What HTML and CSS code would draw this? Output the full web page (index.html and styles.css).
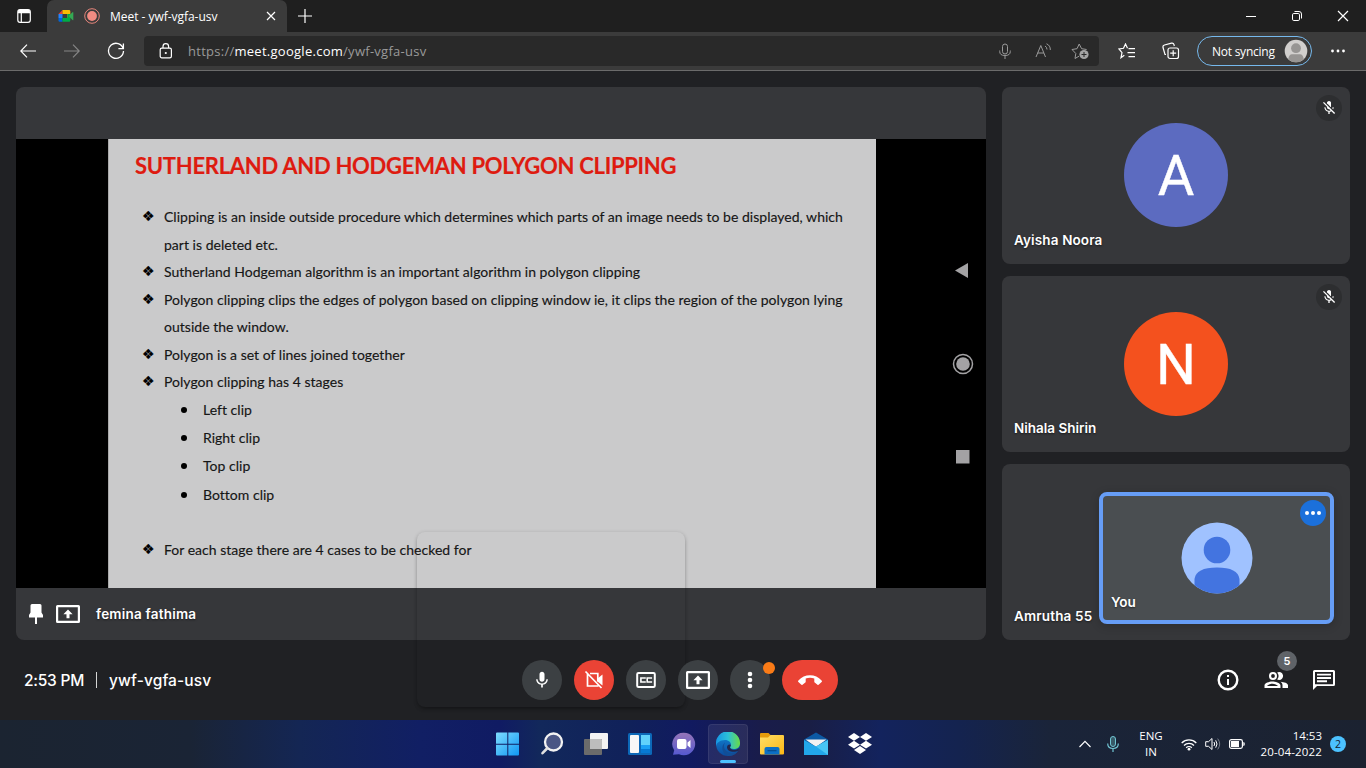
FILE: index.html
```html
<!DOCTYPE html>
<html lang="en">
<head>
<meta charset="utf-8">
<title>Meet - ywf-vgfa-usv</title>
<link rel="stylesheet" href="styles.css">
</head>
<body>
<svg class="defs" width="0" height="0">
  <defs>
    <symbol id="mic-off" viewBox="0 0 24 24"><path d="M10.8 4.9c0-.66.54-1.2 1.2-1.2s1.2.54 1.2 1.2l-.01 3.91L15 10.6V5c0-1.66-1.34-3-3-3-1.54 0-2.79 1.16-2.96 2.65l1.76 1.76V4.9zM19 11h-1.7c0 .58-.1 1.13-.27 1.64l1.27 1.27c.44-.88.7-1.87.7-2.91zM4.41 2.86 3 4.27l6 6V11c0 1.66 1.34 3 3 3 .23 0 .44-.03.65-.08l1.66 1.66c-.71.33-1.5.52-2.31.52-2.76 0-5.3-2.1-5.3-5.1H5c0 3.41 2.72 6.23 6 6.72V21h2v-3.28c.91-.13 1.77-.45 2.55-.9l4.2 4.18 1.41-1.41L4.41 2.86z"/><path d="M9 4.7 15 11V5a3 3 0 0 0-6-.3z"/></symbol>
    <symbol id="present" viewBox="0 0 24 18"><path fill-rule="evenodd" d="M1.5 0h21Q24 0 24 1.5v15q0 1.500-1.500 1.500h-21Q0 18 0 16.500v-15Q0 0 1.500 0zM2.200 2.200v13.600h19.600V2.200zM12 4.600l4.600 4.600h-3.100v4h-3v-4H7.400z"/></symbol>
  </defs>
</svg>

<header class="tabs">
  <svg class="tab-actions" width="14" height="14" viewBox="0 0 14 14"><path fill="none" stroke="#fff" stroke-width="1.200" d="M.8 3v8Q.8 13.300 3 13.300h8q2.300 0 2.300-2.300V3Q13.300.7 11 .7H3Q.8.700.8 3zM4.300 4v9"/><path fill="#fff" d="M1 4.300V2.500Q1 .8 3 .8h8q2 0 2 1.700v1.800z"/></svg>
  <div class="tab">
    <svg width="16" height="16" viewBox="0 0 16 16"><path fill="#ea4335" d="M.5 6 4.500 2v4z"/><path fill="#fbbc04" d="M4.500 2h6.600q1.200 0 1.200 1.200V8L9.400 10V6H4.500z"/><path fill="#2684fc" d="M.5 6h4v4h-4z"/><path fill="#0066da" d="M.5 10h4v3.700H1.700Q.5 13.700.5 12.500z"/><path fill="#00ac47" d="M4.500 10h4.900V6h2.900v6.500q0 1.200-1.200 1.200H4.500z"/><path fill="#34a853" d="m10.500 8 4-3.700q.8-.6.800.400v7q0 .9-.8.300z"/></svg>
    <svg class="rec" width="16" height="16" viewBox="0 0 16 16"><circle cx="8" cy="8" r="7.300" fill="none" stroke="#e8867c"/><circle cx="8" cy="8" r="4.900" fill="#f28b82"/></svg>
    <span class="tab-title">Meet - ywf-vgfa-usv</span>
    <svg class="tab-close" width="10" height="10" viewBox="0 0 10 10"><path stroke="#fff" stroke-width="1.200" d="m1 1 8 8M9 1 1 9"/></svg>
  </div>
  <svg class="newtab" width="16" height="16" viewBox="0 0 16 16"><path stroke="#fff" stroke-width="1.200" d="M8 1v14M1 8h14"/></svg>
  <div class="win">
    <svg width="12" height="12" viewBox="0 0 12 12"><path stroke="#fff" d="M1 6.500h10"/></svg>
    <svg width="12" height="12" viewBox="0 0 12 12"><rect x="1.500" y="3.500" width="7" height="7" rx="1.300" fill="none" stroke="#fff"/><path fill="none" stroke="#fff" d="M3.500 1.500H8Q10.500 1.500 10.500 4v4.500"/></svg>
    <svg width="12" height="12" viewBox="0 0 12 12"><path stroke="#fff" stroke-width="1.200" d="m1 1 10 10M11 1 1 11"/></svg>
  </div>
</header>

<nav class="toolbar">
  <svg class="back" width="16" height="14" viewBox="0 0 16 14"><path fill="none" stroke="#fff" stroke-width="1.200" d="M16 7H1M7 .7.800 7 7 13.300"/></svg>
  <svg class="fwd" width="16" height="14" viewBox="0 0 16 14"><path fill="none" stroke="#858585" stroke-width="1.200" d="M0 7h15M9 .7 15.200 7 9 13.300"/></svg>
  <svg class="reload" width="18" height="18" viewBox="0 0 18 18"><path fill="none" stroke="#fff" stroke-width="1.300" d="M16.200 6.700A7.500 7.500 0 1 0 16.500 9M16.400 1.600v5h-5"/></svg>
  <div class="address">
    <svg class="lock" width="14" height="16" viewBox="0 0 14 16"><rect x="1.200" y="5.200" width="11.200" height="9.600" rx="1.600" fill="none" stroke="#fff" stroke-width="1.200"/><path fill="none" stroke="#fff" stroke-width="1.200" d="M4 5V3.500a2.800 2.800 0 0 1 5.600 0V5"/><circle cx="6.800" cy="10" r="1.100" fill="#fff"/></svg>
    <span class="url">https://<b>meet.google.com</b>/ywf-vgfa-usv</span>
    <svg class="a-mic" width="12" height="16" viewBox="0 0 12 16"><path fill="none" stroke="#9a9a9a" d="M3.500 3.500a2.500 2.500 0 0 1 5 0v5a2.500 2.500 0 0 1-5 0zM.7 7.500v1q0 4 5.300 4t5.300-4v-1M6 12.500V16"/></svg>
    <svg class="a-read" width="17" height="16" viewBox="0 0 17 16"><path fill="none" stroke="#9a9a9a" d="M1 14 5.800 2.500 10.500 14M2.700 10h6.200M10 3q2 1 2 3.500M11.500.800Q15.500 2.500 15.300 7"/></svg>
    <svg class="a-star" width="18" height="18" viewBox="0 0 18 18"><path fill="none" stroke="#9a9a9a" d="M8 14.200 4 16.500l.8-5L1 7.500l5-.8L8.200 2l2.400 4.700 5 .8"/><circle cx="13" cy="12.500" r="4.600" fill="#a5a5a5"/><path stroke="#292929" d="M13 10v5M10.500 12.500h5"/></svg>
  </div>
  <svg class="favs" width="18" height="16" viewBox="0 0 18 16"><path fill="none" stroke="#fff" stroke-width="1.200" d="M6.300 12.300 3 14.700l1-5L1 6l4.500-.7L7.500 1l2 4.300M10.500 5.700H17M9.500 9.700H17M10.500 13.700H17"/></svg>
  <svg class="coll" width="18" height="18" viewBox="0 0 18 18"><rect x="6" y="6" width="10.500" height="10.500" rx="2" fill="none" stroke="#fff" stroke-width="1.200"/><path fill="none" stroke="#fff" stroke-width="1.200" d="M11.200 8.200v6M8.200 11.200h6M4 12.500H3L1 5.500Q.6 3.500 2.500 3L9.500 1.200q2-.4 2.500 1.500l.3 1.300"/></svg>
  <div class="profile"><span>Not syncing</span><svg width="24" height="24" viewBox="0 0 24 24"><circle cx="12" cy="12" r="11.300" fill="#d1cfcd"/><circle cx="12" cy="9.200" r="4.900" fill="#979593"/><path fill="#979593" d="M4.200 20.200Q5 15.300 8 15.300h8q3 0 3.800 4.900a11.300 11.300 0 0 1-15.600 0z"/></svg></div>
  <svg class="dots" width="16" height="4" viewBox="0 0 16 4"><g fill="#fff"><circle cx="2.500" cy="2" r="1.400"/><circle cx="8" cy="2" r="1.400"/><circle cx="13.500" cy="2" r="1.400"/></g></svg>
</nav>

<main class="meet">
  <div class="stage">
    <section class="share">
      <div class="video">
        <article class="slide">
          <h1>SUTHERLAND AND HODGEMAN POLYGON CLIPPING</h1>
          <ul class="points">
            <li>Clipping is an inside outside procedure which determines which parts of an image needs to be displayed, which<br>part is deleted etc.</li>
            <li>Sutherland Hodgeman algorithm is an important algorithm in polygon clipping</li>
            <li>Polygon clipping clips the edges of polygon based on clipping window ie, it clips the region of the polygon lying<br>outside the window.</li>
            <li>Polygon is a set of lines joined together</li>
            <li>Polygon clipping has 4 stages</li>
          </ul>
          <ul class="clips"><li>Left clip</li><li>Right clip</li><li>Top clip</li><li>Bottom clip</li></ul>
          <ul class="points last"><li>For each stage there are 4 cases to be checked for</li></ul>
        </article>
        <div class="phone-nav">
          <svg width="22" height="208" viewBox="0 0 22 208"><path fill="#a3a2a4" d="M3 8.500 16 1v15z"/><circle cx="11" cy="102" r="9.500" fill="none" stroke="#a3a2a4" stroke-width="1.500"/><circle cx="11" cy="102" r="6.800" fill="#a3a2a4"/><path fill="#a3a2a4" d="M4 188h13.500v13.500H4z"/></svg>
        </div>
      </div>
      <footer class="share-bar">
        <svg width="14" height="20" viewBox="0 0 14 20"><path fill="#fff" d="M1.500 1.500Q1.500 0 3 0h8q1.500 0 1.500 1.500v7L14 11v2.500H8V20H6v-6.500H0V11l1.500-2.500z"/></svg>
        <svg class="pres" width="24" height="18" fill="#fff"><use href="#present"/></svg>
        <span>femina fathima</span>
      </footer>
    </section>
    <aside class="people">
      <div class="tile"><i class="mute"><svg width="16" height="16" fill="#fff"><use href="#mic-off"/></svg></i><div class="avatar indigo">A</div><span class="name ayisha">Ayisha Noora</span></div>
      <div class="tile"><i class="mute"><svg width="16" height="16" fill="#fff"><use href="#mic-off"/></svg></i><div class="avatar orange">N</div><span class="name nihala">Nihala Shirin</span></div>
      <div class="tile"><span class="name amrutha">Amrutha 55</span>
        <div class="self">
          <svg class="self-pic" width="72" height="72" viewBox="0 0 72 72"><defs><clipPath id="c"><circle cx="36" cy="36" r="35.500"/></clipPath></defs><g clip-path="url(#c)"><path fill="#a0c2ff" d="M0 0h72v72H0z"/><circle cx="36" cy="28" r="13.300" fill="#4374e0"/><path fill="#4374e0" d="M13.500 72V57Q15 45.500 36 45.500T58.500 57v15z"/></g></svg>
          <svg class="self-more" width="26" height="26" viewBox="0 0 26 26"><circle cx="13" cy="13" r="13" fill="#1b70db"/><g fill="#fff"><circle cx="7" cy="13" r="2"/><circle cx="13" cy="13" r="2"/><circle cx="19" cy="13" r="2"/></g></svg>
          <span class="you">You</span>
        </div>
      </div>
    </aside>
    <div class="ghost"></div>
  </div>
  <div class="controls">
    <div class="when"><span class="clock">2:53 PM</span><i></i><span class="code">ywf-vgfa-usv</span></div>
    <div class="buttons">
      <div class="btn"><svg width="20" height="20" viewBox="0 0 24 24"><path fill="#fff" d="M12 14c1.660 0 3-1.340 3-3V5c0-1.660-1.340-3-3-3S9 3.340 9 5v6c0 1.660 1.340 3 3 3zM17.300 11c0 3-2.540 5.100-5.300 5.100S6.700 14 6.700 11H5c0 3.410 2.720 6.230 6 6.720V21h2v-3.280c3.280-.48 6-3.300 6-6.720z"/></svg></div>
      <div class="btn red"><svg width="20" height="20" viewBox="0 0 20 20"><path fill="none" stroke="#fff" stroke-width="1.700" d="M6 3.500h7.800v8M3.500 4v12h11M1.500 1.500l16 16.500"/><path fill="#fff" d="m13.500 8.500 5-4v11l-5-4z"/></svg></div>
      <div class="btn"><svg width="20" height="16" viewBox="0 0 20 16"><rect x="1.200" y="1" width="17.600" height="14" rx="1.300" fill="none" stroke="#fff" stroke-width="2"/><path fill="none" stroke="#fff" stroke-width="1.600" d="M9 6.800V6H4.900v4H9v-.8M15.300 6.800V6h-4.100v4h4.100v-.8"/></svg></div>
      <div class="btn"><svg width="24" height="18" fill="#fff"><use href="#present"/></svg></div>
      <div class="btn"><svg width="6" height="18" viewBox="0 0 6 18"><g fill="#fff"><circle cx="3" cy="3" r="2.300"/><circle cx="3" cy="9" r="2.300"/><circle cx="3" cy="15" r="2.300"/></g></svg><i class="alert"></i></div>
      <div class="btn red end"><svg width="24" height="24" viewBox="0 0 24 24"><path fill="#fff" d="m23.600 14-2.700 2.600c-.4.400-1 .4-1.400.1l-2.800-2.100c-.3-.2-.4-.5-.4-.8v-3.400a14 14 0 0 0-8.600 0v3.400c0 .3-.1.600-.4.800l-2.800 2.100c-.4.300-1 .3-1.400-.1L.4 14c-.5-.5-.5-1.100 0-1.600C3.500 9.200 7.500 7.300 12 7.300s8.500 1.900 11.600 5.100c.5.500.5 1.100 0 1.600z"/></svg></div>
    </div>
    <div class="tools">
      <svg width="24" height="24" viewBox="0 0 24 24"><path fill="#fff" d="M11 17h2v-6h-2v6zM11 9h2V7h-2z"/><circle cx="12" cy="12" r="9.300" fill="none" stroke="#fff" stroke-width="2.400"/></svg>
      <div class="crowd"><svg width="24" height="24" viewBox="0 0 24 24"><path fill="#fff" d="M8.500 13.500C6.160 13.500.5 14.670.5 17.500V20h16v-2.500c0-2.830-5.660-4-8-4zM3 18c.84-1.200 3.500-2.300 5.500-2.300S13.160 16.800 14 18H3zM9 12a4 4 0 1 0 0-8 4 4 0 0 0 0 8zm0-5.900a1.900 1.900 0 1 1 0 3.800 1.900 1.900 0 0 1 0-3.800zm7.500 7.600c1.300.9 2 2 2 3.550V20H24v-2.750c0-2.020-4-3.280-7.500-3.550zM15 12a4 4 0 1 0-1.860-7.520 5.500 5.500 0 0 1 0 7.040c.54.300 1.180.48 1.860.48z"/></svg><b class="count">5</b></div>
      <svg width="24" height="24" viewBox="0 0 24 24"><path fill="#fff" d="M2.500 2h19Q23 2 23 3.500v13q0 1.500-1.500 1.500H5l-4 4V3.500Q1 2 2.500 2zM3 4v12.300h18V4zm2 1.700h14v1.900H5zm0 3.300h14v1.900H5zm0 3.300h10v1.900H5z" fill-rule="evenodd"/></svg>
    </div>
  </div>
</main>

<footer class="taskbar">
  <div class="apps">
    <div class="app"><svg width="24" height="24" viewBox="0 0 24 24"><defs><linearGradient id="w" x2="1" y2="1" gradientUnits="objectBoundingBox"><stop stop-color="#7fdcff"/><stop offset="1" stop-color="#0f97f2"/></linearGradient></defs><path fill="url(#w)" d="M0 1.500Q0 .5 1 .5h10.300v11.300H0zM12.300.5H22q1 0 1 1v10.300H12.300zM0 12.800h11.300v10.700H1q-1 0-1-1zM12.300 12.800H23v9.700q0 1-1 1h-9.700z"/></svg></div>
    <div class="app"><svg width="24" height="24" viewBox="0 0 24 24"><circle cx="13.500" cy="10" r="8.500" fill="#4a5684" stroke="#f2f2f2" stroke-width="2.300"/><path stroke="#e0e0e0" stroke-width="2.600" stroke-linecap="round" d="m7 16.500-4.500 4.700"/></svg></div>
    <div class="app"><svg width="24" height="24" viewBox="0 0 24 24"><rect x="6" y="1" width="18" height="16" rx="1" fill="#f2f2f2"/><rect y="7" width="18" height="16" rx="1" fill="#6b6b6b"/><path fill="#bdbdbd" d="M6 7h11q1 0 1 1v9H6z"/></svg></div>
    <div class="app"><svg width="24" height="24" viewBox="0 0 24 24"><rect y="1" width="24" height="22" rx="1.500" fill="#0c68b8"/><rect x="2" y="3" width="9" height="18" rx="1" fill="#f7f7f7"/><path fill="#62d2fb" d="M13 3h9v10h-9z"/><path fill="#1ba0f4" d="M13 13h9v4h-9z"/><path fill="#0779d4" d="M13 17h9v4h-9z"/></svg></div>
    <div class="app"><svg width="24" height="24" viewBox="0 0 24 24"><defs><linearGradient id="ch" x2="0" y2="1"><stop stop-color="#9575b8"/><stop offset="1" stop-color="#5559d0"/></linearGradient></defs><path fill="url(#ch)" d="M12 .7a11.300 11.300 0 1 1-5 21.500L1 22.800l1.200-4.500A11.300 11.300 0 0 1 12 .7z"/><rect x="5" y="7" width="9.500" height="10" rx="2" fill="#fff"/><path fill="#fff" d="m15.500 10.500 3-2.500v8l-3-2.500z"/></svg></div>
    <div class="app active"><svg width="24" height="24" viewBox="0 0 24 24"><defs><linearGradient id="e1"><stop stop-color="#1695e5"/><stop offset=".5" stop-color="#2cc0d8"/><stop offset="1" stop-color="#69dc45"/></linearGradient><linearGradient id="e2" x2="0" y2="1"><stop stop-color="#1389d8"/><stop offset="1" stop-color="#0b4b9e"/></linearGradient></defs><circle cx="12" cy="12" r="12" fill="url(#e2)"/><path fill="url(#e1)" d="M0 12A12 12 0 0 1 24 10.500c.3 4-2.500 6.500-6.300 6.500-3 0-4.300-1.300-3.200-2.700C16 12 14 8 9 8c-5 0-8.500 3-9 6z"/><path fill="#124e96" d="M9 10.500c-3 5 1 10.500 7 10.500 3 0 5-1 6.500-2.500A12 12 0 0 1 12 24C6 22 4.500 14 9 10.500z"/><path fill="#21264c" d="M14.500 14.300c-1.500 2 1 3.700 4 3.700 2 0 3.800-.9 5-2.500L22.500 18.500c-3 2-11 2-11.500-3 0-2 1-3 3-3 .9.400.9 1.200.5 1.800z"/></svg></div>
    <div class="app"><svg width="24" height="24" viewBox="0 0 24 24"><defs><linearGradient id="f" x2="1" y2="1"><stop stop-color="#ffdf68"/><stop offset="1" stop-color="#fdb714"/></linearGradient></defs><path fill="#e59b0b" d="M0 2q0-1 1-1h7.500L11 3.500V7H0z"/><path fill="url(#f)" d="M0 5.500h8L10.500 3H23q1 0 1 1v17.500q0 1-1 1H1q-1 0-1-1z"/><path fill="#0c70c5" d="M4.500 22.500V17q0-2 2-2h11q2 0 2 2v5.500z"/><path fill="#064f91" d="M7.500 18h9v1.300h-9z"/></svg></div>
    <div class="app"><svg width="24" height="24" viewBox="0 0 24 24"><path fill="#0c59a4" d="M0 7.500 12 .5l12 7v4H0z"/><path fill="#f2f2f2" d="M1.500 7.500h21L12 15z"/><path fill="#22a7ea" d="M0 8l12 6.500L24 8v15H0z"/><path fill="#48c5f5" d="m12 14.500 12-6.500v15z"/></svg></div>
    <div class="app"><svg width="24" height="22" viewBox="0 0 24 22"><path fill="#fff" d="M6 0l6 3.900-6 3.900-6-3.900zM18 0l6 3.900-6 3.900-6-3.900zM6 7.800l6 3.900-6 3.900-6-3.900zM18 7.800l6 3.900-6 3.900-6-3.900zM6 17l6-3.900 6 3.900-6 3.900z"/></svg></div>
  </div>
  <div class="tray">
    <svg class="chev" width="12" height="8" viewBox="0 0 12 8"><path fill="none" stroke="#fff" stroke-width="1.200" d="M.5 7 6 1.300 11.500 7"/></svg>
    <svg class="tmic" width="12" height="16" viewBox="0 0 12 16"><path fill="#375a68" stroke="#71c5d4" d="M3.500 3a2.500 2.500 0 0 1 5 0v5a2.500 2.500 0 0 1-5 0z"/><path fill="none" stroke="#71c5d4" stroke-width="1.200" d="M.7 7.500q0 5 5.300 5t5.300-5M6 12.500V16"/></svg>
    <div class="lang"><span>ENG</span><span>IN</span></div>
    <svg class="wifi" width="16" height="13" viewBox="0 0 16 13"><path fill="none" stroke="#fff" stroke-width="1.300" d="M.7 5a10.300 10.300 0 0 1 14.600 0M3 7.500a7 7 0 0 1 10 0M5.200 9.800a4 4 0 0 1 5.600 0"/><circle cx="8" cy="11.200" r="1.400" fill="#fff"/></svg>
    <svg class="vol" width="16" height="14" viewBox="0 0 16 14"><path fill="none" stroke="#fff" d="M.7 4.700h2.800L7 1.500v11L3.500 9.300H.7zM9 5q1.300 2 0 4M10.700 3.300q2.600 3.700 0 7.400"/><path fill="none" stroke="#777d89" d="M12.700 1.600q4 5.400 0 10.800"/></svg>
    <svg class="bat" width="16" height="10" viewBox="0 0 16 10"><rect x=".6" y=".6" width="12.800" height="8.800" rx="1.800" fill="none" stroke="#fff" stroke-width="1.200"/><rect x="2" y="2" width="8" height="6" fill="#fff"/><path fill="#fff" d="M14.300 3q1.500 0 1.500 2t-1.500 2z"/></svg>
    <div class="date"><span>14:53</span><span class="day">20-04-2022</span></div>
    <b class="notif">2</b>
  </div>
</footer>
</body>
</html>
```
FILE: styles.css
```css
* { box-sizing: border-box; }
body { margin: 0; width: 1366px; height: 768px; overflow: hidden; background: #202124; color: #fff; font-family: "Open Sans", "Noto Sans", sans-serif; display: flex; flex-direction: column; }
svg { display: block; flex: none; }
.defs { position: absolute; }
i { font-style: normal; }
ul { list-style: none; margin: 0; padding: 0; }

.tabs { height: 32px; flex: none; background: #1f1f1f; display: flex; align-items: center; padding-left: 17px; }
.tab { width: 240px; height: 32px; margin-left: 16px; background: #3b3b3b; border-radius: 7px 7px 0 0; display: flex; align-items: center; padding: 0 11px; }
.rec { margin-left: 10px; }
.tab-title { font-size: 12px; margin-left: 10px; flex: 1; white-space: nowrap; letter-spacing: -.03px; }
.newtab { margin-left: 10px; }
.win { margin-left: auto; display: flex; gap: 34px; padding-right: 17px; }

.toolbar { height: 39px; flex: none; background: #3b3b3b; border-bottom: 1px solid #6b6b6b; display: flex; align-items: center; padding: 0 20px; }
.fwd { margin-left: 28px; }
.reload { margin-left: 27px; }
.address { width: 955px; height: 30px; margin-left: 19px; border-radius: 4px; background: #292929; display: flex; align-items: center; padding: 0 10px 0 15px; }
.url { margin-left: 15px; flex: 1; font-size: 13px; color: #9a9a9a; letter-spacing: .27px; }
.url b { font-weight: 400; color: #fff; }
.a-read { margin-left: 24px; }
.a-star { margin-left: 19px; }
.favs { margin-left: 19px; }
.coll { margin-left: 26px; }
.profile { margin-left: 17px; width: 115px; height: 30px; border: 1px solid #76b9ed; border-radius: 15px; display: flex; align-items: center; justify-content: space-between; padding: 0 3px 0 14px; font-size: 12px; letter-spacing: -.25px; white-space: nowrap; }
.dots { margin-left: 18px; }

.meet { height: 649px; flex: none; background: #202124; font-family: Inter, "Open Sans", sans-serif; }
.stage { position: relative; display: flex; gap: 16px; padding: 16px 16px 0; }
.share { width: 970px; height: 553px; background: #36373a; border-radius: 8px; display: flex; flex-direction: column; padding-top: 52px; }
.video { height: 449px; background: #000; padding-left: 92px; display: flex; }
.slide { width: 768px; height: 449px; background: #cacacb; border-left: 1px solid #aaa; color: #161616; font: 14px/27.500px Lato, sans-serif; letter-spacing: .02px; -webkit-text-stroke: .15px; white-space: nowrap; padding: 8px 0 0 26px; }
.slide h1 { margin: 0 0 20px; height: 36px; font: bold 22px/37px Lato, sans-serif; letter-spacing: -.28px; color: #de1b10; }
.points li { padding-left: 29px; }
.points li::before { content: "\2756"; float: left; width: 22px; margin-left: -22px; font: 14px/27px "DejaVu Sans", sans-serif; color: #000; }
.clips { line-height: 28.400px; }
.clips li { padding-left: 68px; }
.clips li::before { content: ""; float: left; width: 6px; height: 6px; border-radius: 50%; background: #000; margin: 11px 0 0 -22px; }
.last { margin-top: 27px; }
.phone-nav { padding: 123px 0 0 76px; }
.share-bar { flex: 1; display: flex; align-items: center; padding-left: 13px; }
.pres { margin: 0 16px 0 13px; }
.share-bar span, .name, .you { font-size: 13.500px; font-weight: 600; text-shadow: 0 1px 2px #0008; white-space: nowrap; }
.share-bar span { letter-spacing: .22px; }

.people { display: grid; grid-template-rows: 177px 176px 176px; gap: 12px; width: 348px; }
.tile { background: #36373a; border-radius: 8px; position: relative; display: grid; align-content: start; justify-items: center; padding-top: 36px; }
.name { position: absolute; left: 12px; bottom: 16px; line-height: 16px; }
.ayisha { letter-spacing: .13px; }
.amrutha { letter-spacing: .15px; }
.mute { position: absolute; right: 8px; top: 8px; width: 26px; height: 26px; border-radius: 50%; background: #2d2e30; display: grid; place-items: center; }
.avatar { width: 104px; height: 104px; border-radius: 50%; display: grid; place-items: center; font: 400 56px/106px Roboto, sans-serif; -webkit-text-stroke: .4px; }
.indigo { background: #5c6bc0; }
.orange { background: #f4511e; }
.self { position: absolute; left: 97px; top: 28px; width: 235px; height: 132px; border: 4px solid #669df6; border-radius: 8px; background: #4a4e51; box-shadow: 0 2px 10px #0003; }
.self-pic { position: absolute; left: 77.500px; top: 26px; }
.self-more { position: absolute; right: 4px; top: 4px; }
.you { position: absolute; left: 8px; bottom: 10px; line-height: 16px; }
.ghost { position: absolute; left: 417px; top: 461px; width: 268px; height: 175px; border-radius: 8px; box-shadow: 0 1px 4px #0003, 0 3px 5px -2px #0005; }

.controls { height: 80px; display: grid; grid-template-columns: 498px 1fr 146px; align-items: center; padding: 0 24px; }
.when { display: flex; align-items: center; font-size: 15.500px; font-weight: 500; }
.clock { letter-spacing: -.25px; }
.code { letter-spacing: .12px; }
.when i { width: 1px; height: 16px; background: #d5d5d5; margin: 0 12px; }
.buttons { display: flex; gap: 12px; }
.btn { position: relative; width: 40px; height: 40px; border-radius: 50%; background: #3c4043; display: grid; place-items: center; }
.red { background: #ea4335; }
.end { width: 56px; border-radius: 20px; }
.alert { position: absolute; right: -5px; top: 2px; width: 12px; height: 12px; border-radius: 50%; background: #fa7b17; }
.tools { display: flex; gap: 24px; padding-left: 20px; }
.crowd { position: relative; }
.count { position: absolute; left: 13px; top: -17px; width: 20px; height: 20px; border-radius: 50%; background: #5f6368; font-size: 11px; line-height: 20px; text-align: center; font-weight: 600; }

.taskbar { height: 48px; flex: none; display: grid; grid-template-columns: 488px 398px 1fr; background: linear-gradient(90deg, #1b2431 0, #1a2435 190px, #142654 300px, #111f64 420px, #101b63 500px, #12285b 540px, #10215a 630px, #111a60 690px, #191c4a 760px, #191e45 810px, #13235d 880px, #14234f 960px, #1a2439 1050px, #1b2230 1366px); }
.apps { grid-column: 2; display: flex; align-items: center; gap: 4px; }
.app { width: 40px; height: 40px; display: grid; place-items: center; flex: none; }
.active { position: relative; border-radius: 4px; background: #ffffff14; box-shadow: inset 0 0 0 1px #ffffff12; }
.active::after { content: ""; position: absolute; left: 12px; bottom: 1px; width: 16px; height: 3px; border-radius: 2px; background: #4cc2ff; }
.tray { display: flex; align-items: center; padding-left: 193px; font-size: 11.500px; line-height: 16px; }
.tmic { margin-left: 16px; }
.lang { margin-left: 19px; width: 26px; display: grid; justify-items: center; }
.wifi { margin-left: 17px; }
.vol { margin-left: 8px; }
.bat { margin-left: 8px; }
.date { width: 70px; margin-left: 7px; display: grid; justify-items: end; white-space: nowrap; }
.day { letter-spacing: .15px; }
.notif { margin-left: 8px; width: 16px; height: 16px; flex: none; border-radius: 50%; background: #4cc2ff; color: #14212e; font-weight: 400; font-size: 10.500px; text-align: center; line-height: 16px; }
```
